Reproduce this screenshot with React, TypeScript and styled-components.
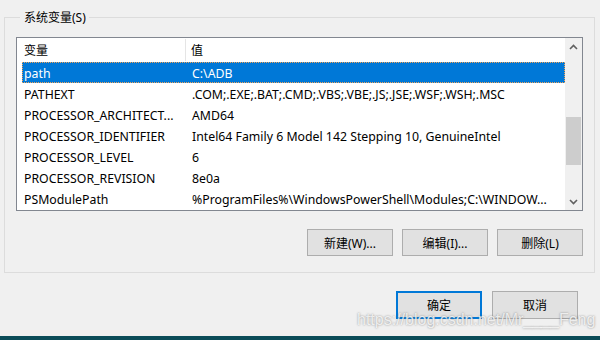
import React from 'react';
import styled, {createGlobalStyle} from 'styled-components';

const GlobalStyle = createGlobalStyle`
  html, body {
    margin: 0;
    padding: 0;
    background: #f0f0f0;
  }
  body {
    font-family: "Noto Sans", "Noto Sans CJK SC", sans-serif;
    font-size: 12px;
    color: #000;
  }
`

const Window = styled.div`
  position: relative;
  width: 600px;
  height: 340px;
  overflow: hidden;
  display: flex;
  flex-direction: column;
`

const Group = styled.fieldset`
  margin: 9px 5px 0 4px;
  padding: 11px 11px 16px 11px;
  border: 1px solid #dcdcdc;
  min-width: 0;
`

const Legend = styled.legend`
  margin-left: 4px;
  padding: 0 3px 0 4px;
  font-size: 12px;
  line-height: 17px;
`

const ListBox = styled.div`
  display: flex;
  height: 172px;
  border: 1px solid #828790;
  background: #fff;
`

const Table = styled.div`
  flex: 1;
  display: flex;
  flex-direction: column;
  padding-left: 5px;
  min-width: 0;
  font-size: 12.3px;
`

const HeaderRow = styled.div`
  display: grid;
  grid-template-columns: 164px 1fr;
  height: 24px;
  margin-left: -5px;
  padding-left: 5px;
`

const HeaderCell = styled.div<{ $divider?: boolean }>`
  display: flex;
  align-items: center;
  padding-left: ${p => p.$divider ? '2px' : '5px'};
  border-right: ${p => p.$divider ? '1px solid #e5e5e5' : 'none'};
  margin: 1px 0;
  font-size: 12px;
`

const Row = styled.div<{ $selected?: boolean }>`
  display: grid;
  grid-template-columns: 164px 1fr;
  height: 21px;
  padding-top: 1px;
  align-items: center;
  box-sizing: border-box;
  background: ${p => p.$selected ? '#0078d7' : 'transparent'};
  color: ${p => p.$selected ? '#fff' : '#000'};
  border: 1px dotted ${p => p.$selected ? '#f0a45a' : 'transparent'};
`

const Cell = styled.div<{ $second?: boolean }>`
  padding-left: ${p => p.$second ? '5px' : '1px'};
  white-space: nowrap;
  overflow: hidden;
`

const Scrollbar = styled.div`
  width: 17px;
  background: #f0f0f0;
  display: flex;
  flex-direction: column;
  align-items: center;
`

const Arrow = styled.div`
  height: 17px;
  width: 17px;
  display: flex;
  align-items: center;
  justify-content: center;
`

const Track = styled.div`
  flex: 1;
  width: 100%;
  display: flex;
  flex-direction: column;
  align-items: center;
`

const Thumb = styled.div`
  width: 15px;
  height: 48px;
  margin-top: 62px;
  background: #cdcdcd;
`

const ButtonRow = styled.div`
  display: flex;
  justify-content: flex-end;
  gap: 9px;
  margin-top: 18px;
`

const Button = styled.button<{ $primary?: boolean }>`
  width: 86px;
  height: 27px;
  box-sizing: border-box;
  background: #e1e1e1;
  border: ${p => p.$primary ? '2px solid #0078d7' : '1px solid #adadad'};
  font-family: "Noto Sans", "Noto Sans CJK SC", sans-serif;
  font-size: 12px;
  color: #000;
  padding: 0;
`

const DialogButtons = styled.div`
  display: flex;
  justify-content: flex-end;
  gap: 10px;
  margin: 18px 22px 0 0;

  & > button {
    height: 28px;
  }
`

const Spacer = styled.div`
  flex: 1;
`

const Taskbar = styled.div`
  height: 4px;
  background: #0b4c58;
`

const Watermark = styled.div`
  position: absolute;
  left: 357px;
  top: 311px;
  font-family: "Liberation Sans", Arial, sans-serif;
  font-size: 16px;
  color: rgba(255, 255, 255, 0.8);
  text-shadow: 0 0 2px rgba(90, 90, 90, 0.7);
  pointer-events: none;
`

const Chevron = ({up}: { up?: boolean }) => (
    <svg width="9" height="6" viewBox="0 0 9 6">
        <path
            d={up ? 'M1 5 L4.5 1.5 L8 5' : 'M1 1 L4.5 4.5 L8 1'}
            fill="none"
            stroke="#606060"
            strokeWidth="1.6"
        />
    </svg>
)

const vars = [
    {name: 'path', value: 'C:\\ADB'},
    {name: 'PATHEXT', value: '.COM;.EXE;.BAT;.CMD;.VBS;.VBE;.JS;.JSE;.WSF;.WSH;.MSC'},
    {name: 'PROCESSOR_ARCHITECT...', value: 'AMD64'},
    {name: 'PROCESSOR_IDENTIFIER', value: 'Intel64 Family 6 Model 142 Stepping 10, GenuineIntel'},
    {name: 'PROCESSOR_LEVEL', value: '6'},
    {name: 'PROCESSOR_REVISION', value: '8e0a'},
    {name: 'PSModulePath', value: '%ProgramFiles%\\WindowsPowerShell\\Modules;C:\\WINDOW...'},
]

const App = () => {
    return (
        <Window>
            <GlobalStyle/>
            <Group>
                <Legend>系统变量(S)</Legend>
                <ListBox>
                    <Table>
                        <HeaderRow>
                            <HeaderCell $divider>变量</HeaderCell>
                            <HeaderCell>值</HeaderCell>
                        </HeaderRow>
                        {vars.map((v, i) =>
                            <Row key={v.name} $selected={i === 0}>
                                <Cell>{v.name}</Cell>
                                <Cell $second>{v.value}</Cell>
                            </Row>
                        )}
                    </Table>
                    <Scrollbar>
                        <Arrow><Chevron up/></Arrow>
                        <Track><Thumb/></Track>
                        <Arrow><Chevron/></Arrow>
                    </Scrollbar>
                </ListBox>
                <ButtonRow>
                    <Button>新建(W)...</Button>
                    <Button>编辑(I)...</Button>
                    <Button>删除(L)</Button>
                </ButtonRow>
            </Group>
            <DialogButtons>
                <Button $primary>确定</Button>
                <Button>取消</Button>
            </DialogButtons>
            <Spacer/>
            <Taskbar/>
            <Watermark>https://blog.csdn.net/Mr____Feng</Watermark>
        </Window>
    );
};

export default App;
